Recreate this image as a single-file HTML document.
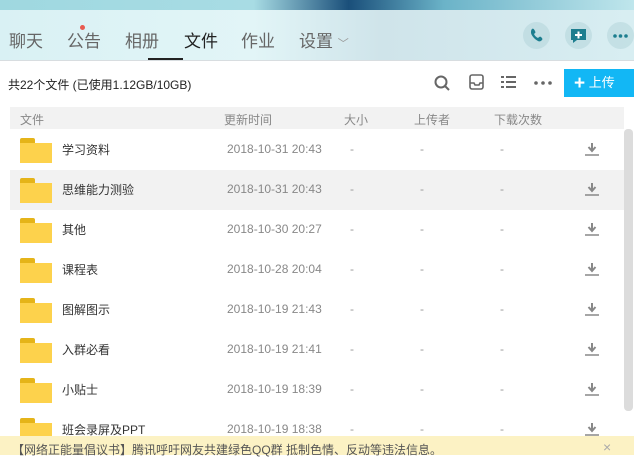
<!DOCTYPE html>
<html><head><meta charset="utf-8"><style>
*{margin:0;padding:0;box-sizing:border-box}
body{width:634px;height:455px;overflow:hidden;font-family:"Liberation Sans","Noto Sans CJK SC",sans-serif;background:#fff;position:relative;color:#333}
.hdr{position:absolute;left:0;top:0;width:634px;height:61px;background:linear-gradient(90deg,#d9f1f4 0%,#e2f5f7 40%,#cfe4ea 60%,#d8eef2 100%);overflow:hidden}
.top{position:absolute;left:0;top:0;width:634px;height:10px;background:linear-gradient(90deg,#9fd8e0,#a8dce4 40%,#1a4f7a 55%,#6bb3c8 70%,#bfe6ec)}
.tab{position:absolute;top:27px;font-size:17px;color:#666}
.ul{position:absolute;left:148px;top:58px;width:35px;height:3px;background:#222}
.line{position:absolute;left:0;top:60px;width:634px;height:1px;background:#d8dde0}
.circ{position:absolute;top:22px;width:27px;height:27px;border-radius:50%;background:rgba(160,200,205,.35)}
.t{position:absolute;font-size:12px}
.th{position:absolute;left:10px;top:107px;width:614px;height:22px;background:#f2f2f2}
.row{position:absolute;left:10px;width:614px;height:40px}
.row.g{background:#f2f2f2}
.f{position:absolute;left:10px;top:8px;width:32px;height:25px}
.f:before{content:"";position:absolute;left:0;top:0;width:15px;height:8px;background:#e5b419;border-radius:2px 2px 0 0}
.f:after{content:"";position:absolute;left:0;top:5px;width:32px;height:20px;background:#fdd24c}
.n{position:absolute;left:52px;top:11px;font-size:12px;color:#333}
.d{position:absolute;left:217px;top:12px;font-size:12px;color:#888}
.da{position:absolute;top:12px;font-size:12px;color:#999}
.dl{position:absolute;left:574px;top:11px;width:16px;height:16px}
</style></head><body>
<div class="hdr"><div class="top"></div>
<div class="tab" style="left:9px">聊天</div>
<div class="tab" style="left:67px">公告</div>
<div style="position:absolute;left:80px;top:25px;width:5px;height:5px;border-radius:50%;background:#e85a4f"></div>
<div class="tab" style="left:125px">相册</div>
<div class="tab" style="left:184px;color:#222">文件</div>
<div class="tab" style="left:241px">作业</div>
<div class="tab" style="left:299px">设置 <span style="font-size:11px;color:#999">﹀</span></div>
<div class="circ" style="left:523px"><svg width="27" height="27" viewBox="0 0 27 27"><path d="M9 7c1-1 2 0 3 2s0 2-1 3c1 2 2 3 4 4 1-1 2-2 3-1s2 2 1 3-2 2-4 1-6-4-7-8c0-2 0-3 1-4z" fill="#1d7e8f"/></svg></div>
<div class="circ" style="left:565px"><svg width="27" height="27" viewBox="0 0 27 27"><path d="M6 7h15v11h-9l-4 3v-3h-2z" fill="#1d7e8f"/><path d="M13.5 9.5v7M10 13h7" stroke="#fff" stroke-width="2"/></svg></div>
<div class="circ" style="left:607px"><svg width="27" height="27" viewBox="0 0 27 27"><circle cx="8" cy="14" r="1.8" fill="#1d7e8f"/><circle cx="13.5" cy="14" r="1.8" fill="#1d7e8f"/><circle cx="19" cy="14" r="1.8" fill="#1d7e8f"/></svg></div>
<div class="ul"></div><div class="line"></div></div>
<div class="t" style="left:8px;top:76px;color:#222">共22个文件 (已使用1.12GB/10GB)</div>
<svg style="position:absolute;left:433px;top:74px" width="18" height="18"><circle cx="8" cy="8" r="5.5" fill="none" stroke="#666" stroke-width="2"/><path d="M12 12l4 4" stroke="#666" stroke-width="2"/></svg>
<svg style="position:absolute;left:468px;top:73px" width="18" height="18"><rect x="2" y="2" width="13" height="14" rx="2" fill="none" stroke="#666" stroke-width="1.6"/><path d="M2 10h4l1 2h4l1-2h3" fill="none" stroke="#666" stroke-width="1.6"/></svg>
<svg style="position:absolute;left:500px;top:74px" width="18" height="18"><path d="M1 3h3M1 8h3M1 13h3M6 3h10M6 8h10M6 13h10" stroke="#666" stroke-width="2"/></svg>
<svg style="position:absolute;left:533px;top:76px" width="20" height="14"><circle cx="3" cy="7" r="1.8" fill="#666"/><circle cx="10" cy="7" r="1.8" fill="#666"/><circle cx="17" cy="7" r="1.8" fill="#666"/></svg>
<div style="position:absolute;left:564px;top:69px;width:70px;height:28px;background:#12b7f5;color:#fff;font-size:13px;line-height:28px;padding-left:10px"><b style="font-size:19px;vertical-align:-2px">+</b> 上传</div>
<div class="th"></div>
<div class="t" style="left:20px;top:111px;color:#888">文件</div>
<div class="t" style="left:224px;top:111px;color:#888">更新时间</div>
<div class="t" style="left:344px;top:111px;color:#888">大小</div>
<div class="t" style="left:414px;top:111px;color:#888">上传者</div>
<div class="t" style="left:494px;top:111px;color:#888">下载次数</div>
<div class="row" style="top:130px"><div class="f"></div><div class="n">学习资料</div><div class="d">2018-10-31 20:43</div><div class="da" style="left:340px">-</div><div class="da" style="left:410px">-</div><div class="da" style="left:490px">-</div><svg class="dl" viewBox="0 0 16 16"><path d="M8 2v7M4.5 6l3.5 4 3.5-4" stroke="#888" stroke-width="2" fill="none"/><path d="M1 14h14" stroke="#888" stroke-width="1.5"/></svg></div>
<div class="row g" style="top:170px"><div class="f"></div><div class="n">思维能力测验</div><div class="d">2018-10-31 20:43</div><div class="da" style="left:340px">-</div><div class="da" style="left:410px">-</div><div class="da" style="left:490px">-</div><svg class="dl" viewBox="0 0 16 16"><path d="M8 2v7M4.5 6l3.5 4 3.5-4" stroke="#888" stroke-width="2" fill="none"/><path d="M1 14h14" stroke="#888" stroke-width="1.5"/></svg></div>
<div class="row" style="top:210px"><div class="f"></div><div class="n">其他</div><div class="d">2018-10-30 20:27</div><div class="da" style="left:340px">-</div><div class="da" style="left:410px">-</div><div class="da" style="left:490px">-</div><svg class="dl" viewBox="0 0 16 16"><path d="M8 2v7M4.5 6l3.5 4 3.5-4" stroke="#888" stroke-width="2" fill="none"/><path d="M1 14h14" stroke="#888" stroke-width="1.5"/></svg></div>
<div class="row" style="top:250px"><div class="f"></div><div class="n">课程表</div><div class="d">2018-10-28 20:04</div><div class="da" style="left:340px">-</div><div class="da" style="left:410px">-</div><div class="da" style="left:490px">-</div><svg class="dl" viewBox="0 0 16 16"><path d="M8 2v7M4.5 6l3.5 4 3.5-4" stroke="#888" stroke-width="2" fill="none"/><path d="M1 14h14" stroke="#888" stroke-width="1.5"/></svg></div>
<div class="row" style="top:290px"><div class="f"></div><div class="n">图解图示</div><div class="d">2018-10-19 21:43</div><div class="da" style="left:340px">-</div><div class="da" style="left:410px">-</div><div class="da" style="left:490px">-</div><svg class="dl" viewBox="0 0 16 16"><path d="M8 2v7M4.5 6l3.5 4 3.5-4" stroke="#888" stroke-width="2" fill="none"/><path d="M1 14h14" stroke="#888" stroke-width="1.5"/></svg></div>
<div class="row" style="top:330px"><div class="f"></div><div class="n">入群必看</div><div class="d">2018-10-19 21:41</div><div class="da" style="left:340px">-</div><div class="da" style="left:410px">-</div><div class="da" style="left:490px">-</div><svg class="dl" viewBox="0 0 16 16"><path d="M8 2v7M4.5 6l3.5 4 3.5-4" stroke="#888" stroke-width="2" fill="none"/><path d="M1 14h14" stroke="#888" stroke-width="1.5"/></svg></div>
<div class="row" style="top:370px"><div class="f"></div><div class="n">小贴士</div><div class="d">2018-10-19 18:39</div><div class="da" style="left:340px">-</div><div class="da" style="left:410px">-</div><div class="da" style="left:490px">-</div><svg class="dl" viewBox="0 0 16 16"><path d="M8 2v7M4.5 6l3.5 4 3.5-4" stroke="#888" stroke-width="2" fill="none"/><path d="M1 14h14" stroke="#888" stroke-width="1.5"/></svg></div>
<div class="row" style="top:410px"><div class="f"></div><div class="n">班会录屏及PPT</div><div class="d">2018-10-19 18:38</div><div class="da" style="left:340px">-</div><div class="da" style="left:410px">-</div><div class="da" style="left:490px">-</div><svg class="dl" viewBox="0 0 16 16"><path d="M8 2v7M4.5 6l3.5 4 3.5-4" stroke="#888" stroke-width="2" fill="none"/><path d="M1 14h14" stroke="#888" stroke-width="1.5"/></svg></div>
<div style="position:absolute;left:624px;top:129px;width:9px;height:282px;background:#dcdcdc;border-radius:4px"></div>
<div style="position:absolute;left:0;top:436px;width:634px;height:19px;background:#fcf2c4;font-size:12px;color:#555;padding:5px 0 0 12px;white-space:nowrap">【网络正能量倡议书】腾讯呼吁网友共建绿色QQ群 抵制色情、反动等违法信息。<span style="position:absolute;left:603px;top:3px;color:#aaa;font-size:14px">×</span></div>
</body></html>
